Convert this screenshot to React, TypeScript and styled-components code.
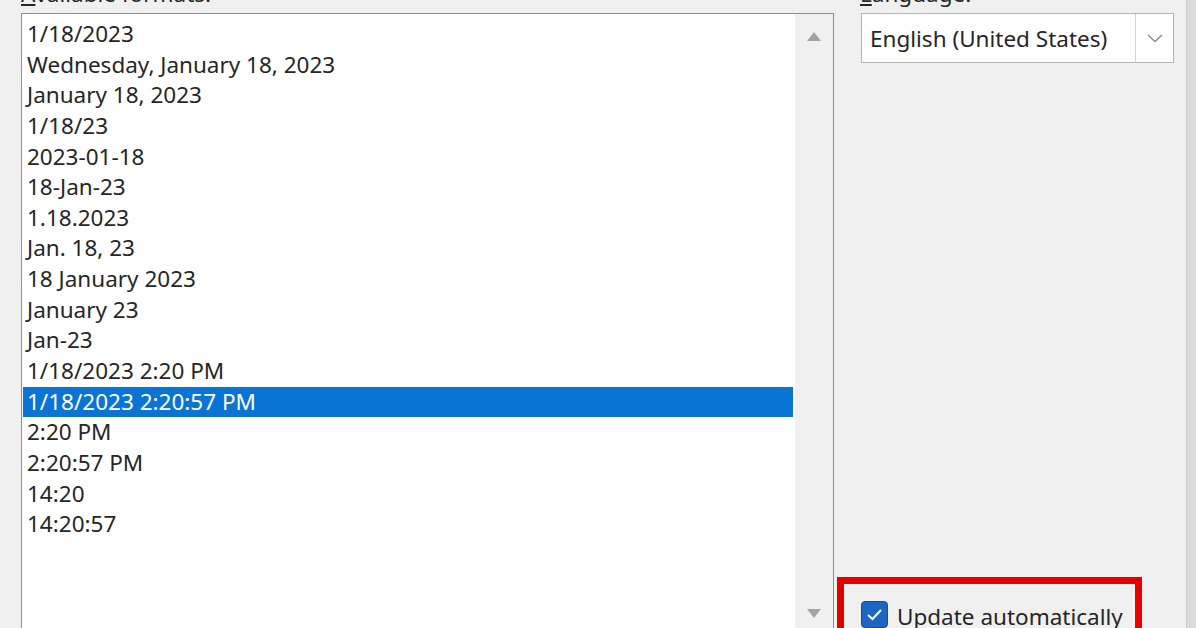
import styled, { createGlobalStyle } from "styled-components";

const formats = [
  "1/18/2023",
  "Wednesday, January 18, 2023",
  "January 18, 2023",
  "1/18/23",
  "2023-01-18",
  "18-Jan-23",
  "1.18.2023",
  "Jan. 18, 23",
  "18 January 2023",
  "January 23",
  "Jan-23",
  "1/18/2023 2:20 PM",
  "1/18/2023 2:20:57 PM",
  "2:20 PM",
  "2:20:57 PM",
  "14:20",
  "14:20:57",
];

const SELECTED = 12;

const GlobalStyle = createGlobalStyle`
  html, body {
    margin: 0;
    padding: 0;
    background: #f0f0f0;
  }
  body {
    font-family: "Noto Sans", "Open Sans", sans-serif;
    color: #262626;
  }
`;

const App = () => {
  return (
    <>
      <GlobalStyle />
      <Dialog>
        <FormatsColumn>
          <Label>
            <u>A</u>vailable formats:
          </Label>
          <ListBox>
            <Items>
              {formats.map((f, i) => (
                <Item key={f} $selected={i === SELECTED}>
                  {f}
                </Item>
              ))}
            </Items>
            <ScrollBar>
              <ScrollButton>
                <Arrow viewBox="0 0 14 9">
                  <path d="M7 0 L14 9 L0 9 Z" />
                </Arrow>
              </ScrollButton>
              <ScrollButton>
                <Arrow viewBox="0 0 14 9">
                  <path d="M0 0 L14 0 L7 9 Z" />
                </Arrow>
              </ScrollButton>
            </ScrollBar>
          </ListBox>
        </FormatsColumn>

        <SideColumn>
          <SideLabel>
            <u>L</u>anguage:
          </SideLabel>
          <Combo>
            <ComboText>English (United States)</ComboText>
            <ComboButton>
              <svg width="16" height="9" viewBox="0 0 16 9">
                <path d="M1 1 L8 7.5 L15 1" fill="none" stroke="#8a8a8a" strokeWidth="1.4" />
              </svg>
            </ComboButton>
          </Combo>
          <Highlight>
            <CheckRow>
              <CheckBox>
                <svg width="17" height="13" viewBox="0 0 17 13">
                  <path d="M2 7 L6.5 11 L15 2" fill="none" stroke="#fff" strokeWidth="2" />
                </svg>
              </CheckBox>
              <CheckText>Update automatically</CheckText>
            </CheckRow>
          </Highlight>
        </SideColumn>

        <EdgeStrip />
      </Dialog>
    </>
  );
};

const Dialog = styled.div`
  display: grid;
  grid-template-columns: 835px 351px 10px;
  width: 1196px;
  height: 628px;
  overflow: hidden;
  background: #f0f0f0;
`;

const FormatsColumn = styled.div`
  display: flex;
  flex-direction: column;
  padding-left: 21px;
`;

const Label = styled.div`
  margin-top: -19px;
  height: 29px;
  line-height: 26px;
  font-size: 22.5px;
  white-space: nowrap;
`;

const ListBox = styled.div`
  margin-top: 3px;
  width: 813px;
  height: 623px;
  flex-shrink: 0;
  box-sizing: border-box;
  border: 1px solid #8e8e8e;
  background: #fff;
  display: flex;
`;

const Items = styled.div`
  flex: 1;
  padding: 5px 2px 0 1px;
`;

const Item = styled.div<{ $selected?: boolean }>`
  height: 30.65px;
  line-height: 30.65px;
  padding-left: 4px;
  font-size: 22.5px;
  white-space: nowrap;
  color: ${(p) => (p.$selected ? "#fff" : "#262626")};
  background: ${(p) => (p.$selected ? "#0a74d6" : "transparent")};
`;

const ScrollBar = styled.div`
  width: 38px;
  background: #f0f0f0;
  display: flex;
  flex-direction: column;
  justify-content: space-between;
`;

const ScrollButton = styled.div`
  height: 44px;
  display: flex;
  align-items: center;
  justify-content: center;
`;

const Arrow = styled.svg`
  width: 14px;
  height: 9px;
  fill: #a3a3a3;
`;

const SideColumn = styled.div`
  display: flex;
  flex-direction: column;
`;

const SideLabel = styled(Label)`
  padding-left: 25px;
`;

const Combo = styled.div`
  margin: 3px 0 0 26px;
  width: 313px;
  height: 50px;
  box-sizing: border-box;
  border: 1px solid #b4b4b4;
  background: #fff;
  display: flex;
  align-items: center;
`;

const ComboText = styled.span`
  flex: 1;
  padding-left: 8px;
  font-size: 22.5px;
  white-space: nowrap;
`;

const ComboButton = styled.div`
  width: 37px;
  align-self: stretch;
  border-left: 1px solid #d4d4d4;
  display: flex;
  align-items: center;
  justify-content: center;
`;

const Highlight = styled.div`
  margin: 514px 0 0 2px;
  width: 305px;
  height: 90px;
  flex-shrink: 0;
  box-sizing: border-box;
  border: 7px solid #e60000;
  padding: 17px 0 0 17px;
`;

const CheckRow = styled.div`
  display: flex;
  align-items: flex-start;
  gap: 9px;
`;

const CheckBox = styled.div`
  width: 27px;
  height: 27px;
  flex-shrink: 0;
  box-sizing: border-box;
  border-radius: 4px;
  background: #1a66c2;
  border: 1px solid #0f4f9e;
  display: flex;
  align-items: center;
  justify-content: center;
`;

const CheckText = styled.span`
  font-size: 22.5px;
  line-height: 31px;
  white-space: nowrap;
`;

const EdgeStrip = styled.div`
  background: #dbdbdb;
  border-left: 1px solid #cfcfcf;
`;

export default App;
